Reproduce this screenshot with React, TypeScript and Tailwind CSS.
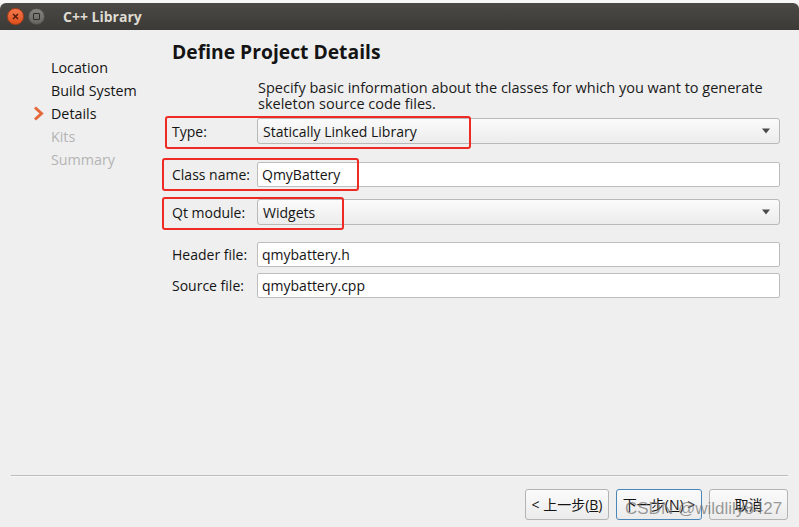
import React from 'react';

const font = { fontFamily: '"Open Sans", "Noto Sans CJK SC", sans-serif' };

function Combo({ value }: { value: string }) {
  return (
    <div className="flex-1 h-[26px] flex items-center justify-between px-[5px] border border-[#b9b9b9] rounded-[3px] bg-gradient-to-b from-[#fbfbfb] to-[#ececec]">
      <span className="text-[14px] text-[#141414]">{value}</span>
      <svg width="10" height="6" viewBox="0 0 10 6" className="mr-[3px]">
        <path d="M1 0.5 L9 0.5 L5 5.5 Z" fill="#4a4a4a" />
      </svg>
    </div>
  );
}

function Field({ value }: { value: string }) {
  return (
    <div className="flex-1 h-[25px] flex items-center px-[4px] border border-[#bdbdbd] rounded-[2px] bg-white">
      <span className="text-[14px] text-[#141414]">{value}</span>
    </div>
  );
}

export default function App() {
  return (
    <div className="w-[799px] h-[527px] bg-[#efefef] flex flex-col overflow-hidden relative text-[#141414]" style={font}>
      {/* Title bar */}
      <div className="h-[3px] bg-[#f7f7f7]" />
      <div className="h-[27px] bg-gradient-to-b from-[#4a4945] to-[#3b3a36] rounded-t-[6px] flex items-center pl-[7px] gap-[4px]">
        <div className="w-[17px] h-[17px] rounded-full bg-gradient-to-b from-[#f4784a] to-[#e04f1d] border border-[#b53d15] flex items-center justify-center">
          <svg width="7" height="7" viewBox="0 0 7 7">
            <path d="M1 1 L6 6 M6 1 L1 6" stroke="#4a1a0a" strokeWidth="1.4" />
          </svg>
        </div>
        <div className="w-[17px] h-[17px] rounded-full bg-gradient-to-b from-[#85847e] to-[#66655f] border border-[#4e4d49] flex items-center justify-center">
          <div className="w-[7px] h-[7px] border border-[#2d2c29] rounded-[1px]" />
        </div>
        <span className="ml-[14px] text-[14px] font-bold text-[#dfdbd2]">C++ Library</span>
      </div>

      {/* Body */}
      <div className="flex flex-1">
        <div className="w-[165px] pt-[26px]">
          {['Location', 'Build System', 'Details', 'Kits', 'Summary'].map((s, i) => (
            <div key={s} className="h-[23px] flex items-center relative pl-[51px]">
              {i === 2 && (
                <svg width="11" height="15" viewBox="0 0 11 15" className="absolute left-[33px] top-[4px]">
                  <path d="M2 1.5 L8.5 7.5 L2 13.5" fill="none" stroke="#e4683a" strokeWidth="3" strokeLinejoin="miter" />
                </svg>
              )}
              <span className={`text-[14.3px] ${i > 2 ? 'text-[#b4b4b4]' : 'text-[#141414]'}`}>{s}</span>
            </div>
          ))}
        </div>

        <div className="flex-1 pr-[19px] pl-[7px] pt-[10px]">
          <h1 className="text-[19.3px] font-bold leading-[24px]">Define Project Details</h1>
          <p className="ml-[86px] mt-[16px] text-[14.5px] leading-[16px] text-[#1a1a1a]">
            Specify basic information about the classes for which you want to generate skeleton source code files.
          </p>

          <div className="mt-[6px] flex items-center h-[26px]">
            <span className="w-[85px] text-[14px]">Type:</span>
            <Combo value="Statically Linked Library" />
          </div>
          <div className="mt-[18px] flex items-center h-[25px]">
            <span className="w-[85px] text-[14px]">Class name:</span>
            <Field value="QmyBattery" />
          </div>
          <div className="mt-[12px] flex items-center h-[26px]">
            <span className="w-[85px] text-[14px]">Qt module:</span>
            <Combo value="Widgets" />
          </div>
          <div className="mt-[17px] flex items-center h-[25px]">
            <span className="w-[85px] text-[14px]">Header file:</span>
            <Field value="qmybattery.h" />
          </div>
          <div className="mt-[6px] flex items-center h-[25px]">
            <span className="w-[85px] text-[14px]">Source file:</span>
            <Field value="qmybattery.cpp" />
          </div>
        </div>
      </div>

      {/* Footer */}
      <div className="mx-[11px] h-[2px] border-t border-[#bcbcbc] bg-[#f8f8f8]" />
      <div className="h-[50px] flex items-start justify-end gap-[7px] pt-[12px] pr-[11px]">
        <button className="w-[84px] h-[31px] rounded-[3px] border border-[#b4b4b4] bg-gradient-to-b from-[#fbfbfb] to-[#ebebeb] text-[14px]">&lt; 上一步(<u>B</u>)</button>
        <button className="w-[86px] h-[31px] rounded-[3px] border border-[#4b86b8] bg-gradient-to-b from-[#fbfbfb] to-[#ebebeb] text-[14px]">下一步(<u>N</u>) &gt;</button>
        <button className="w-[79px] h-[31px] rounded-[3px] border border-[#b4b4b4] bg-gradient-to-b from-[#fbfbfb] to-[#ebebeb] text-[14px]">取消</button>
      </div>

      {/* Red annotation boxes */}
      <div className="absolute left-[165px] top-[116px] w-[306px] h-[33px] border-[2.5px] border-[#ee2a24] rounded-[3px]" />
      <div className="absolute left-[162px] top-[158px] w-[197px] h-[33px] border-[2.5px] border-[#ee2a24] rounded-[3px]" />
      <div className="absolute left-[162px] top-[197px] w-[182px] h-[33px] border-[2.5px] border-[#ee2a24] rounded-[3px]" />

      {/* Watermark */}
      <div className="absolute left-[625px] top-[496px] text-[17px] text-[#707070]/70" style={{ fontFamily: '"Liberation Sans", sans-serif' }}>
        CSDN @wildlily8427
      </div>
    </div>
  );
}
